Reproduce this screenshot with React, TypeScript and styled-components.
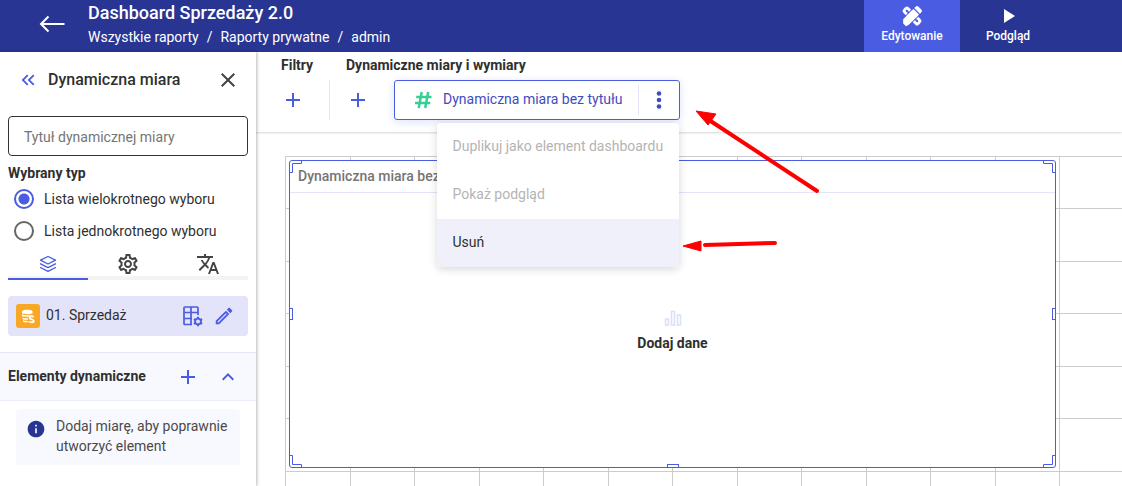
import React, { useState } from 'react';
import styled, { createGlobalStyle } from 'styled-components';
import { MdPlayArrow, MdClose, MdKeyboardDoubleArrowLeft, MdOutlineSettings, MdTranslate, MdAdd, MdExpandLess, MdInfo, MdOutlineEdit } from 'react-icons/md';

const c = {
  navy: '#283593',
  accent: '#4a5ce2',
  text: '#2f2f2f',
  line: '#e3e3f9',
  grid: '#cccccc',
};

const Global = createGlobalStyle`
  *, *::before, *::after { box-sizing: border-box; }
  body { margin: 0; background: #fff; color: ${c.text}; font: 400 14px/20px Roboto, sans-serif; overflow: hidden; }
  button, input { font: inherit; color: inherit; }
  h1, h2, h3 { margin: 0; font-size: inherit; font-weight: 500; }
  p { margin: 0; }
`;

const Page = styled.div`
  display: flex;
  flex-direction: column;
  height: 100vh;
`;

const Header = styled.header`
  display: flex;
  flex: none;
  height: 52px;
  background: ${c.navy};
  color: #fff;
`;

const PlainButton = styled.button`
  display: flex;
  align-items: center;
  justify-content: center;
  padding: 0;
  border: 0;
  background: none;
  cursor: pointer;
`;

const IconButton = styled(PlainButton)<{ $tone?: string; $size?: number }>`
  flex: none;
  width: ${p => p.$size ?? 32}px;
  height: ${p => p.$size ?? 32}px;
  color: ${p => p.$tone ?? c.accent};
`;

const BackButton = styled(PlainButton)`
  width: 88px;
  height: 48px;
  padding-left: 16px;
`;

const Heading = styled.div`
  flex: 1;
`;

const Title = styled.h1`
  font-size: 18px;
  line-height: 26px;
`;

const Crumbs = styled.nav`
  display: flex;
  gap: 8px;
  line-height: 22px;
  a { color: inherit; text-decoration: none; }
`;

const Modes = styled.div`
  display: flex;
  padding-right: 66px;
`;

const Mode = styled(PlainButton)<{ $active?: boolean }>`
  flex-direction: column;
  justify-content: flex-start;
  width: 96px;
  padding-top: 4px;
  font-size: 12px;
  line-height: 16px;
  font-weight: 500;
  background: ${p => (p.$active ? c.accent : 'transparent')};
`;

const Body = styled.div`
  display: flex;
  flex: 1;
  min-height: 0;
`;

const Sidebar = styled.aside`
  position: relative;
  z-index: 3;
  flex: none;
  width: 256px;
  background: #fff;
  box-shadow: 1px 0 3px rgba(0, 0, 0, 0.28);
`;

const SideHead = styled.div`
  display: flex;
  align-items: center;
  height: 56px;
  padding: 0 12px;
  h2 { flex: 1; padding-left: 4px; font-size: 16px; }
`;

const SideForm = styled.div`
  padding: 8px 8px 0;
`;

const TitleInput = styled.input`
  display: block;
  width: 100%;
  height: 40px;
  padding: 2px 15px 0;
  border: 1px solid #333;
  border-radius: 4px;
  background: #fff;
  outline: 0;
  &::placeholder { color: #757575; opacity: 1; }
`;

const TypeSet = styled.fieldset`
  margin: 0;
  padding: 0;
  border: 0;
  legend { padding: 7px 0 0; font-weight: 700; }
`;

const Choice = styled.label`
  display: flex;
  align-items: center;
  gap: 10px;
  height: 32px;
  padding-left: 6px;
`;

const Radio = styled.input`
  appearance: none;
  width: 20px;
  height: 20px;
  margin: 0;
  border: 2px solid #666;
  border-radius: 50%;
  &:checked { border-color: ${c.accent}; background: radial-gradient(circle, ${c.accent} 5px, #fff 6px); }
`;

const Tabs = styled.div`
  display: flex;
  height: 33px;
`;

const Tab = styled(PlainButton)<{ $active?: boolean }>`
  flex: 1;
  padding-top: 2px;
  color: ${p => (p.$active ? c.accent : '#444')};
  border-bottom: 2px solid ${p => (p.$active ? c.accent : '#f3f3f3')};
  box-shadow: inset 0 -2px 0 #f3f3f3;
`;

const Label = styled.span`
  padding-bottom: 2px;
`;

const Source = styled.div`
  display: flex;
  align-items: center;
  height: 40px;
  margin: 16px 8px;
  padding: 0 8px;
  border-radius: 4px;
  background: ${c.line};
  ${Label} { flex: 1; padding-left: 6px; }
`;

const Section = styled.div`
  display: flex;
  align-items: center;
  height: 49px;
  padding: 0 8px;
  border-top: 1px solid ${c.line};
  border-bottom: 1px solid #ececf6;
  background: #f8f9ff;
  h3 { flex: 1; padding-bottom: 2px; font-weight: 700; }
`;

const Info = styled.div`
  display: flex;
  gap: 10px;
  margin: 8px 16px;
  padding: 7px 10px 9px;
  border-radius: 4px;
  background: #f8f9ff;
  color: #4a4a4a;
  svg { flex: none; margin-top: 3px; color: ${c.navy}; }
`;

const Main = styled.main`
  flex: 1;
  min-width: 0;
  display: flex;
  flex-direction: column;
`;

const Toolbar = styled.div`
  position: relative;
  z-index: 2;
  display: flex;
  flex: none;
  height: 80px;
  padding-top: 3px;
  background: #fff;
  box-shadow: 0 1px 2px rgba(0, 0, 0, 0.16);
`;

const Group = styled.section`
  h2 { font-weight: 700; }
`;

const FilterGroup = styled(Group)`
  width: 74px;
  h2 { padding-left: 25px; }
`;

const MeasureGroup = styled(Group)`
  h2 { padding-left: 16px; }
`;

const GroupRow = styled.div<{ $divided?: boolean }>`
  display: flex;
  align-items: center;
  gap: 20px;
  height: 40px;
  margin-top: 5px;
  padding-left: ${p => (p.$divided ? 21 : 12)}px;
  border-right: ${p => (p.$divided ? `1px solid ${c.line}` : '0')};
`;

const Measure = styled.div`
  position: relative;
  display: flex;
  align-items: center;
  height: 40px;
  border: 1px solid ${c.accent};
  border-radius: 3px;
  box-shadow: 0 2px 8px rgba(74, 92, 226, 0.18);
`;

const MeasureName = styled(PlainButton)`
  gap: 8px;
  height: 30px;
  padding: 0 15px 0 16px;
  border-right: 1px solid ${c.line};
  color: #3f4cc0;
  svg { color: #36cf96; }
`;

const Menu = styled.div`
  position: absolute;
  z-index: 3;
  top: 42px;
  right: 0;
  width: 242px;
  border-radius: 4px;
  overflow: hidden;
  background: #fff;
  box-shadow: 0 2px 8px rgba(0, 0, 0, 0.16);
`;

const MenuItem = styled.button`
  display: block;
  width: 100%;
  height: 48px;
  padding: 0 16px 2px;
  border: 0;
  background: #f0f0fa;
  color: ${c.text};
  text-align: left;
  white-space: nowrap;
  &:disabled { background: #fff; color: #b4b4b4; }
`;

const Pointers = styled.svg`
  position: absolute;
  z-index: 4;
  top: 24px;
  left: 284px;
  pointer-events: none;
`;

const Canvas = styled.div`
  flex: 1;
  margin: 24px 0 0 29px;
  padding: 4px 66px 0 4px;
  background-color: #fff;
  background-image:
    linear-gradient(90deg, ${c.grid} 1px, transparent 1px, transparent 65px, ${c.grid} 65px, ${c.grid} 66px, transparent 66px),
    linear-gradient(${c.grid} 1px, transparent 1px, transparent 52px, ${c.grid} 52px, ${c.grid} 53px, transparent 53px);
  background-size: 129px 105px;
`;

const Widget = styled.section`
  position: relative;
  display: flex;
  flex-direction: column;
  min-height: 308px;
  border: 1px solid ${c.accent};
  border-radius: 3px;
  background: #fff;
`;

const WidgetTitle = styled.h2`
  height: 32px;
  padding: 0 8px;
  border-bottom: 1px solid ${c.line};
  line-height: 30px;
  color: #757575;
`;

const Empty = styled.div`
  display: flex;
  flex: 1;
  flex-direction: column;
  align-items: center;
  justify-content: center;
  gap: 7px;
  padding-top: 3px;
  font-weight: 700;
  svg { color: #dcdff9; }
`;

const Corner = styled.svg<{ $v: 'top' | 'bottom'; $h: 'left' | 'right' }>`
  position: absolute;
  ${p => p.$v}: -1px;
  ${p => p.$h}: -1px;
  transform: scale(${p => (p.$h === 'left' ? 1 : -1)}, ${p => (p.$v === 'top' ? 1 : -1)});
`;

const Grip = styled.i<{ $side: 'left' | 'right' | 'bottom' }>`
  position: absolute;
  border: 1px solid ${c.accent};
  background: #fff;
  ${p => (p.$side === 'bottom'
    ? 'bottom: -1px; left: calc(50% - 6px); width: 12px; height: 4px;'
    : `${p.$side}: -1px; top: calc(50% - 6px); width: 4px; height: 12px;`)}
`;

const Stroke = { fill: 'none', stroke: 'currentColor' } as const;

const BackArrow = () => (
  <svg width="26" height="18" viewBox="0 0 26 18" {...Stroke} strokeWidth="2"><path d="M25.500 9H2M9.500 1.500L2 9l7.500 7.500" /></svg>
);
const Tools = () => (
  <svg width="24" height="24" viewBox="0 0 24 24">
    <g transform="rotate(45 12 12)">
      <rect x="1" y="8.200" width="22" height="7.600" rx="2.500" fill="currentColor" />
      <path d="M4.500 12h2M17.500 12h2" stroke={c.accent} strokeWidth="2" strokeLinecap="round" />
    </g>
    <g transform="rotate(-45 12 12)">
      <path d="M7 7.500h11.500M7 16.500h11.500" stroke={c.accent} />
      <path d="M3.500 8L.5 11v4L3.500 16H18V8zM19.200 8h2a2 2 0 012 2v4a2 2 0 01-2 2h-2z" fill="currentColor" />
    </g>
  </svg>
);
const Hash = () => (
  <svg width="24" height="24" viewBox="0 0 24 24" {...Stroke} strokeWidth="2.500">
    <path d="M10.700 4L7.700 20M17.200 4l-3 16M5.200 9h15.300M4 15h15.300" />
  </svg>
);
const Dots = () => (
  <svg width="24" height="24" viewBox="0 0 24 24" fill="currentColor">
    <circle cx="12" cy="5.500" r="2.300" /><circle cx="12" cy="12" r="2.300" /><circle cx="12" cy="18.500" r="2.300" />
  </svg>
);
const Layers = () => (
  <svg width="18" height="18" viewBox="0 0 18 18" {...Stroke} strokeWidth="1.300" strokeLinejoin="round" strokeLinecap="round">
    <path d="M9 1.500l7.500 3.700L9 9 1.500 5.200zM1.500 8.800L9 12.600l7.500-3.800M1.500 12.500L9 16.300l7.500-3.800" />
  </svg>
);
const TableCog = () => (
  <svg width="22" height="22" viewBox="0 0 22 22" {...Stroke} strokeWidth="1.700">
    <path d="M11 19.500H4a1 1 0 01-1-1V3a1 1 0 011-1h12a1 1 0 011 1v7M3 7.500h14M3 13.500h8M10 2v17" />
    <circle cx="17" cy="16.500" r="2.900" strokeWidth="1.800" />
    <path d="M17 11.800v1.700M17 19.500v1.700M12.900 14.200l1.500.8M19.600 18l1.500.8M12.900 18.800l1.500-.8M19.600 15l1.500-.8" strokeWidth="2" />
  </svg>
);
const SourceLogo = () => (
  <svg width="24" height="24" viewBox="0 0 24 24">
    <rect width="24" height="24" rx="3" fill="#f9a825" />
    <path fill="#fff" d="M6 7.500C6 5.300 16.500 5.300 16.500 7.500v1.900C14.500 10.500 8 10.500 6 9.300zM6 10.300c2 1 5 1.100 10.500.6v1c-2.500 0-4 .3-4.500 1-2 0-4.500 0-6-.6zM6.500 13.400c1.500.8 4 .9 5.500.8v1.600c-2 .1-4.500-.1-5.500-.8zM7 16.300c1.300.6 3.300.7 5.500.6v1.400c-2 .1-4.700-.1-5.500-.8z" />
    <path d="M17.700 12.900c-1.300-1-4.200-.9-4.200.8 0 2 4.300 1.200 4.300 3.200 0 1.800-3.100 1.800-4.500.6" fill="none" stroke="#fff" strokeWidth="1.900" />
  </svg>
);
const Bars = () => (
  <svg width="18" height="16" viewBox="0 0 18 16" {...Stroke} strokeWidth="1.500">
    <path d="M1.500 9h3v6h-3zM7.500 1.500h3V15h-3zM13.500 5h3v10h-3z" />
  </svg>
);
const CornerMark = ({ v, h }: { v: 'top' | 'bottom'; h: 'left' | 'right' }) => (
  <Corner $v={v} $h={h} width="13" height="13" viewBox="0 0 13 13" fill="none" stroke={c.accent}>
    <path d="M12.500 0v3.500h-9v9H0" />
  </Corner>
);

export default function App() {
  const [kind, setKind] = useState('multi');
  return (
    <Page>
      <Global />
      <Header>
        <BackButton aria-label="Wstecz"><BackArrow /></BackButton>
        <Heading>
          <Title>Dashboard Sprzedaży 2.0</Title>
          <Crumbs>
            <a href="#all">Wszystkie raporty</a><span>/</span>
            <a href="#private">Raporty prywatne</a><span>/</span>
            <a href="#admin">admin</a>
          </Crumbs>
        </Heading>
        <Modes>
          <Mode $active><Tools />Edytowanie</Mode>
          <Mode><MdPlayArrow size={24} />Podgląd</Mode>
        </Modes>
      </Header>
      <Body>
        <Sidebar>
          <SideHead>
            <IconButton aria-label="Zwiń"><MdKeyboardDoubleArrowLeft size={22} /></IconButton>
            <h2>Dynamiczna miara</h2>
            <IconButton $tone="#444" aria-label="Zamknij"><MdClose size={24} /></IconButton>
          </SideHead>
          <SideForm>
            <TitleInput placeholder="Tytuł dynamicznej miary" aria-label="Tytuł dynamicznej miary" />
            <TypeSet>
              <legend>Wybrany typ</legend>
              <Choice>
                <Radio type="radio" name="kind" checked={kind === 'multi'} onChange={() => setKind('multi')} />
                Lista wielokrotnego wyboru
              </Choice>
              <Choice>
                <Radio type="radio" name="kind" checked={kind === 'single'} onChange={() => setKind('single')} />
                Lista jednokrotnego wyboru
              </Choice>
            </TypeSet>
            <Tabs>
              <Tab $active aria-label="Dane"><Layers /></Tab>
              <Tab aria-label="Ustawienia"><MdOutlineSettings size={24} /></Tab>
              <Tab aria-label="Tłumaczenia"><MdTranslate size={24} /></Tab>
            </Tabs>
          </SideForm>
          <Source>
            <SourceLogo />
            <Label>01. Sprzedaż</Label>
            <IconButton aria-label="Ustawienia tabeli"><TableCog /></IconButton>
            <IconButton aria-label="Edytuj"><MdOutlineEdit size={22} /></IconButton>
          </Source>
          <Section>
            <h3>Elementy dynamiczne</h3>
            <IconButton $size={40} aria-label="Dodaj element"><MdAdd size={24} /></IconButton>
            <IconButton $size={40} aria-label="Zwiń sekcję"><MdExpandLess size={24} /></IconButton>
          </Section>
          <Info>
            <MdInfo size={20} />
            <p>Dodaj miarę, aby poprawnie utworzyć element</p>
          </Info>
        </Sidebar>
        <Main>
          <Toolbar>
            <FilterGroup>
              <h2>Filtry</h2>
              <GroupRow $divided><IconButton aria-label="Dodaj filtr"><MdAdd size={24} /></IconButton></GroupRow>
            </FilterGroup>
            <MeasureGroup>
              <h2>Dynamiczne miary i wymiary</h2>
              <GroupRow>
                <IconButton aria-label="Dodaj miarę"><MdAdd size={24} /></IconButton>
                <Measure>
                  <MeasureName><Hash /><Label>Dynamiczna miara bez tytułu</Label></MeasureName>
                  <IconButton $size={40} $tone="#3f4cc0" aria-label="Więcej"><Dots /></IconButton>
                  <Menu>
                    <MenuItem disabled>Duplikuj jako element dashboardu</MenuItem>
                    <MenuItem disabled>Pokaż podgląd</MenuItem>
                    <MenuItem>Usuń</MenuItem>
                  </Menu>
                  <Pointers width="150" height="150" viewBox="0 0 150 150" fill="#f00" stroke="#f00">
                    <path d="M30 15L138 86M26 140L96 138" strokeWidth="4" strokeLinecap="round" />
                    <path d="M17 6l20 3-8 11zM4 141l18-5v10z" strokeWidth="1" />
                  </Pointers>
                </Measure>
              </GroupRow>
            </MeasureGroup>
          </Toolbar>
          <Canvas>
            <Widget>
              <WidgetTitle>Dynamiczna miara bez tytułu</WidgetTitle>
              <Empty><Bars />Dodaj dane</Empty>
              <CornerMark v="top" h="left" />
              <CornerMark v="top" h="right" />
              <CornerMark v="bottom" h="left" />
              <CornerMark v="bottom" h="right" />
              <Grip $side="left" />
              <Grip $side="right" />
              <Grip $side="bottom" />
            </Widget>
          </Canvas>
        </Main>
      </Body>
    </Page>
  );
}
